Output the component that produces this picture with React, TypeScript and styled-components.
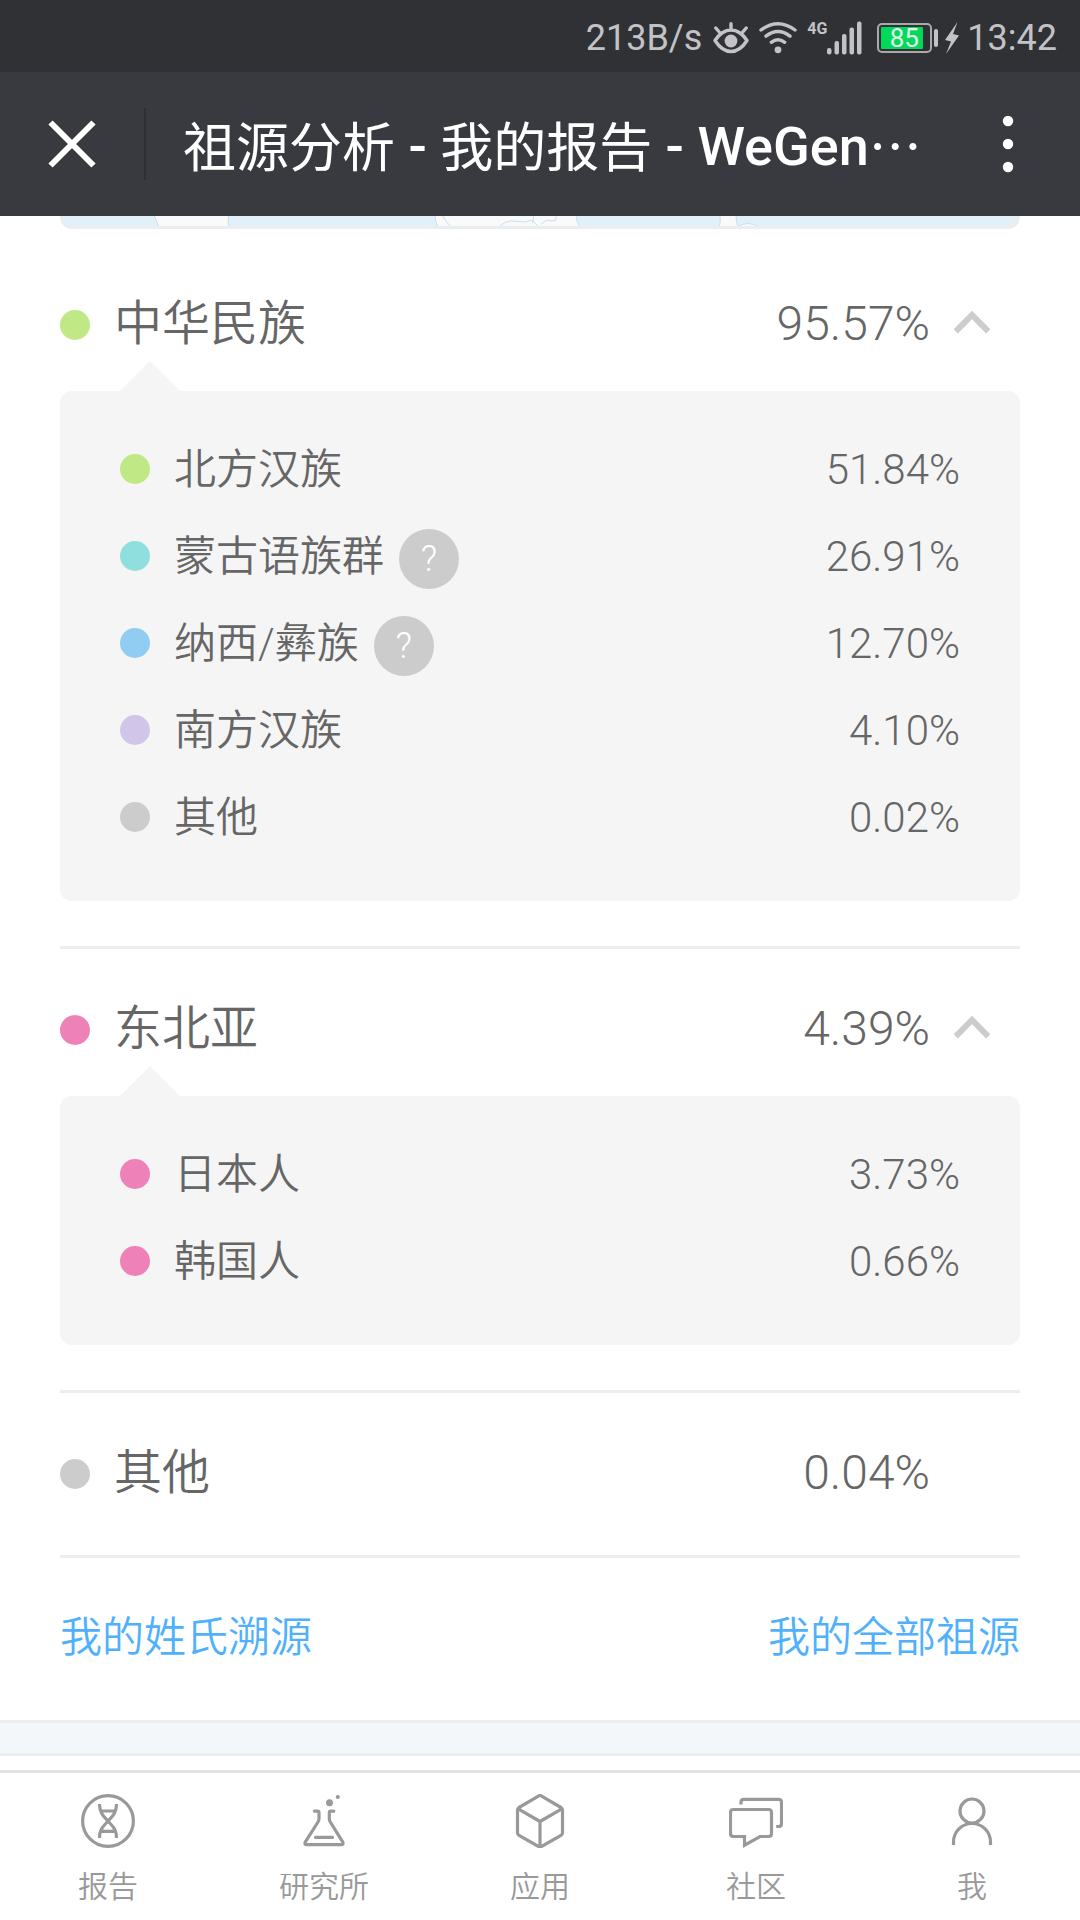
import React, { useState } from 'react';
import styled, { createGlobalStyle } from 'styled-components';

const GlobalStyle = createGlobalStyle`
  *, *::before, *::after { box-sizing: border-box; }
  body {
    margin: 0;
    background: #ffffff;
    color: #666666;
    font-family: Roboto, "Noto Sans CJK SC", sans-serif;
    font-weight: 300;
  }
  button { border: 0; padding: 0; background: none; color: inherit; font: inherit; cursor: pointer; }
  a { color: inherit; text-decoration: none; }
  ul { list-style: none; margin: 0; padding: 0; }
  h1, h2 { margin: 0; font: inherit; }
  svg { display: block; flex: none; }
`;

const Page = styled.div`
  display: flex;
  flex-direction: column;
  min-height: 100vh;
`;

const StatusBar = styled.div`
  display: flex;
  align-items: center;
  justify-content: flex-end;
  height: 72px;
  padding: 3px 23px 0;
  background: #303135;
  color: #c3c3c7;
  font-size: 36px;
  font-weight: 400;
  line-height: 42px;
`;

const StatusIcons = styled.div`
  display: flex;
  align-items: center;
  padding: 0 8px 0 11px;
`;

const NetworkType = styled.span`
  align-self: flex-start;
  margin-left: 10px;
  font-size: 16px;
  font-weight: 700;
  line-height: 16px;
`;

const Battery = styled.div`
  display: flex;
  align-items: center;
  gap: 2px;
  margin: 0 7px 0 15px;
`;

const BatteryCase = styled.div`
  width: 55px;
  height: 30px;
  padding: 2px;
  border: 2px solid #a9a9ac;
  border-radius: 5px;
`;

const BatteryLevel = styled.div`
  width: 42px;
  height: 22px;
  padding-left: 4px;
  border-radius: 1px;
  background: #00d95a;
  color: #e3f5ea;
  font-size: 26px;
  line-height: 22px;
  text-align: center;
`;

const BatteryTip = styled.div`
  width: 4px;
  height: 18px;
  border-radius: 2px;
  background: #c3c3c7;
`;

const AppBar = styled.header`
  display: flex;
  align-items: center;
  height: 144px;
  background: #393a3f;
  color: #ffffff;
`;

const BarButton = styled.button<{ $width: number }>`
  display: flex;
  flex: none;
  align-items: center;
  justify-content: center;
  width: ${(p) => p.$width}px;
  height: 144px;
`;

const BarDivider = styled.span`
  flex: none;
  width: 2px;
  height: 72px;
  background: #2e2f33;
`;

const Title = styled.h1`
  flex: 1;
  min-width: 0;
  padding: 6px 0 0 37px;
  overflow: hidden;
  white-space: nowrap;
  font-size: 54px;
  font-weight: 500;
  line-height: 80px;
`;

const HanTitle = styled.span`
  font-family: "Noto Sans CJK SC", sans-serif;
  font-size: 53px;
  font-weight: 400;
  line-height: 1;
  vertical-align: -2px;
`;

const Ellipsis = styled(HanTitle)`
  font-family: "Noto Sans CJK JP", sans-serif;
`;

const Main = styled.main`
  flex: 1;
`;

const Report = styled.div`
  padding: 0 60px;
`;

const MapEdge = styled.div`
  height: 13px;
  margin-bottom: 15px;
  overflow: hidden;
  border: 3px solid #ebeef1;
  border-top: 0;
  border-radius: 0 0 12px 12px;
  background: #e2f0fa;
`;

const Group = styled.section`
  padding: 45px 0;
  border-bottom: 3px solid #ebeef1;
`;

const GroupHead = styled.button`
  display: flex;
  align-items: center;
  width: 100%;
  height: 72px;
  font-size: 48px;
  line-height: 72px;
  text-align: left;

  &:disabled { color: inherit; cursor: default; }
`;

const Dot = styled.span<{ $color: string }>`
  flex: none;
  width: 30px;
  height: 30px;
  margin-right: 24px;
  border-radius: 50%;
  background: ${(p) => p.$color};
`;

const Name = styled.span`
  font-weight: 350;
`;

const GroupName = styled(Name)`
  padding-bottom: 2px;
`;

const Percent = styled.span`
  margin-left: auto;
`;

const GroupPercent = styled(Percent)`
  padding-bottom: 2px;
`;

const ChevronSlot = styled.span<{ $open: boolean }>`
  display: flex;
  flex: none;
  justify-content: center;
  width: 84px;
  margin-right: 6px;
  transform: ${(p) => (p.$open ? 'none' : 'rotate(180deg)')};
`;

const Panel = styled.ul`
  position: relative;
  margin-top: 30px;
  padding: 34px 60px 41px;
  border-radius: 12px;
  background: #f5f5f5;

  &::before {
    content: "";
    position: absolute;
    left: 60px;
    bottom: 100%;
    border: 30px solid transparent;
    border-top: 0;
    border-bottom-color: #f5f5f5;
  }
`;

const Row = styled.li`
  display: flex;
  align-items: center;
  height: 87px;
  font-size: 42px;
  line-height: 65px;

  ${Name}, ${Percent} { padding-top: 2px; }
`;

const HelpButton = styled.button`
  flex: none;
  width: 60px;
  height: 60px;
  margin: 6px 0 0 15px;
  border-radius: 50%;
  background: #cccccc;
  color: #ffffff;
  font-size: 36px;
  line-height: 60px;
  text-align: center;
`;

const Links = styled.nav`
  display: flex;
  justify-content: space-between;
  padding: 44px 60px 46px;
  color: #4fb1fb;
  font-size: 42px;
  font-weight: 350;
  line-height: 72px;
`;

const Gap = styled.div`
  height: 36px;
  border: solid #ebeef1;
  border-width: 3px 0;
  background: #f3f7fa;
`;

const TabBar = styled.nav`
  position: sticky;
  bottom: 0;
  display: flex;
  border-top: 3px solid #e0e4e7;
  background: #ffffff;
`;

const Tab = styled.a`
  display: flex;
  flex: 1;
  flex-direction: column;
  align-items: center;
  gap: 16px;
  height: 147px;
  padding-top: 21px;
  color: #999999;
  font-size: 30px;
  font-weight: 350;
  line-height: 45px;
`;

type Item = { name: string; value: string; color: string; help?: boolean };
type GroupData = Item & { items?: Item[] };

const groups: GroupData[] = [
  {
    name: '中华民族', value: '95.57%', color: '#c0e884',
    items: [
      { name: '北方汉族', value: '51.84%', color: '#c0e884' },
      { name: '蒙古语族群', value: '26.91%', color: '#8fdfdf', help: true },
      { name: '纳西/彝族', value: '12.70%', color: '#91cdf2', help: true },
      { name: '南方汉族', value: '4.10%', color: '#d1c5ea' },
      { name: '其他', value: '0.02%', color: '#cccccc' },
    ],
  },
  {
    name: '东北亚', value: '4.39%', color: '#ee82b8',
    items: [
      { name: '日本人', value: '3.73%', color: '#ee82b8' },
      { name: '韩国人', value: '0.66%', color: '#ee82b8' },
    ],
  },
  { name: '其他', value: '0.04%', color: '#cccccc' },
];

const stroke = { fill: 'none', stroke: 'currentColor', strokeWidth: 3.2 };

const tabs = [
  {
    label: '报告',
    icon: (
      <g {...stroke}>
        <circle cx="27" cy="27" r="25.4" />
        <path d="M18.5 10C18.5 19 22.5 22 27 27.2C31.5 32 35.5 35 35.5 44M35.5 10C35.5 19 31.5 22 27 27.2C22.5 32 18.5 35 18.5 44M20 17h14M20 37.3h14" />
      </g>
    ),
  },
  {
    label: '研究所',
    icon: (
      <g {...stroke} strokeLinecap="round" strokeLinejoin="round">
        <path d="M17.5 17.2h3q1.5 0 1.5 1.5v6q0 1.5-1 3.3L8.2 48.2q-1 2.5 1.5 2.5h34.6q2.5 0 1.5-2.5L33.3 28q-1-1.8-1-3.3v-6q0-1.5 1.5-1.5h3M18.5 43.3h17" />
        <circle cx="32.5" cy="8.7" r="3.5" fill="currentColor" stroke="none" />
        <circle cx="40.8" cy="3" r="2.1" fill="currentColor" stroke="none" />
      </g>
    ),
  },
  {
    label: '应用',
    icon: (
      <g {...stroke} strokeLinejoin="round">
        <path d="M25.8 1.8q1.2-.7 2.4 0L48 13.5q1.5 1 1.5 2.5v23q0 1.5-1.5 2.4L28.2 52.7q-1.2.7-2.4 0L6 41.4Q4.5 40.5 4.5 39V16q0-1.5 1.5-2.5ZM5.2 14.8L27 27.5L48.8 14.8M27 27.5V53" />
      </g>
    ),
  },
  {
    label: '社区',
    icon: (
      <g {...stroke}>
        <path d="M4.5 15.5h35q3 0 3 3v21q0 3-3 3H31L15.5 51.2v-8.7h-11q-3 0-3-3v-21q0-3 3-3Z" />
        <path d="M12 10.5V8.3q0-3 3-3h34.5q3 0 3 3v21.2q0 3-3 3h-2.3" />
      </g>
    ),
  },
  {
    label: '我',
    icon: (
      <g {...stroke}>
        <circle cx="27" cy="17" r="12" />
        <path d="M8.5 51v-3a18.5 18.5 0 0 1 37 0v3" />
      </g>
    ),
  },
];

const WifiSvg = styled.svg`
  margin-left: 10px;
`;

function EyeIcon() {
  return (
    <svg width="36" height="32" viewBox="0 0 36 32" aria-hidden="true">
      <g fill="none" stroke="currentColor" strokeWidth="3.4" strokeLinecap="round" strokeLinejoin="round">
        <path d="M2 18.5Q9 8 18 8t16 10.5Q27 29.5 18 29.5T2 18.5ZM18 7V1.8M7.5 11.5L2.8 6M28.5 11.5L33.2 6" />
      </g>
      <circle cx="18" cy="19" r="6.4" fill="currentColor" />
    </svg>
  );
}

function WifiIcon() {
  return (
    <WifiSvg width="38" height="32" viewBox="0 0 38 32" aria-hidden="true">
      <path
        d="M2 8Q19-4.5 36 8M7 14.2Q19 4.8 31 14.2M12.3 20.3Q19 15 25.7 20.3"
        fill="none"
        stroke="currentColor"
        strokeWidth="3.4"
        strokeLinecap="round"
      />
      <circle cx="19" cy="27.8" r="3.4" fill="currentColor" />
    </WifiSvg>
  );
}

function SignalIcon() {
  return (
    <svg width="35" height="34" viewBox="0 0 35 34" aria-hidden="true">
      <g fill="currentColor">
        <rect x="0" y="27" width="4.5" height="6.5" rx="2.2" />
        <rect x="7.5" y="20" width="4.5" height="13.5" rx="2" />
        <rect x="15" y="13" width="4.5" height="20.5" rx="2" />
        <rect x="22.5" y="6.5" width="4.5" height="27" rx="2" />
        <rect x="30" y="0.5" width="4.5" height="33" rx="2" />
      </g>
    </svg>
  );
}

function BoltIcon() {
  return (
    <svg width="14" height="32" viewBox="0 0 14 32" aria-hidden="true">
      <path d="M12.5 0L0 18l6 1.5L1 32L14 13.5l-6-1.5Z" fill="currentColor" />
    </svg>
  );
}

function MapStrip() {
  return (
    <MapEdge>
      <svg width="100%" height="10" viewBox="0 0 954 10" preserveAspectRatio="none" aria-hidden="true">
        <g fill="#fafafa" stroke="#c3e0f2" strokeWidth="1">
          <path d="M91-1L96 11H166Q164 5 166-1Z" />
          <path d="M372-1Q372 6 375 11H517Q513 5 513-1Z" />
          <path d="M657-1Q658 6 656 11H675Q673 5 673-1Z" />
          <path d="M674 11Q685 4 696 11" />
          <path d="M379-1Q383 6 388 11M437 10Q442 5 448 5L462 6L469 4L476 11M470-1Q472 4 469 7M478 8L484 4Q490 6 493 4V-1" fill="none" />
        </g>
      </svg>
    </MapEdge>
  );
}

function AncestryGroup({ group }: { group: GroupData }) {
  const [open, setOpen] = useState(true);
  return (
    <Group>
      <h2>
        <GroupHead
          type="button"
          disabled={!group.items}
          aria-expanded={group.items ? open : undefined}
          onClick={() => setOpen(!open)}
        >
          <Dot $color={group.color} />
          <GroupName>{group.name}</GroupName>
          <GroupPercent>{group.value}</GroupPercent>
          <ChevronSlot $open={open}>
            {group.items && (
              <svg width="38" height="30" viewBox="0 0 38 30" aria-hidden="true">
                <path d="M2.8 21.4L19 5L35.2 21.4" fill="none" stroke="#cccccc" strokeWidth="6" />
              </svg>
            )}
          </ChevronSlot>
        </GroupHead>
      </h2>
      {group.items && open && (
        <Panel>
          {group.items.map((item) => (
            <Row key={item.name}>
              <Dot $color={item.color} />
              <Name>{item.name}</Name>
              {item.help && <HelpButton type="button" aria-label={item.name}>?</HelpButton>}
              <Percent>{item.value}</Percent>
            </Row>
          ))}
        </Panel>
      )}
    </Group>
  );
}

export default function App() {
  return (
    <Page>
      <GlobalStyle />
      <StatusBar>
        <span>213B/s</span>
        <StatusIcons>
          <EyeIcon />
          <WifiIcon />
          <NetworkType>4G</NetworkType>
          <SignalIcon />
          <Battery>
            <BatteryCase>
              <BatteryLevel>85</BatteryLevel>
            </BatteryCase>
            <BatteryTip />
          </Battery>
          <BoltIcon />
        </StatusIcons>
        <span>13:42</span>
      </StatusBar>
      <AppBar>
        <BarButton type="button" $width={144} aria-label="关闭">
          <svg width="48" height="48" viewBox="0 0 48 48" aria-hidden="true">
            <path d="M2.5 2.5L45.5 45.5M45.5 2.5L2.5 45.5" stroke="#ffffff" strokeWidth="6" />
          </svg>
        </BarButton>
        <BarDivider />
        <Title>
          <HanTitle>祖源分析</HanTitle> - <HanTitle>我的报告</HanTitle> - WeGen<Ellipsis lang="ja">…</Ellipsis>
        </Title>
        <BarButton type="button" $width={144} aria-label="更多">
          <svg width="12" height="58" viewBox="0 0 12 58" aria-hidden="true">
            <g fill="#ffffff">
              <circle cx="6" cy="6" r="5.2" />
              <circle cx="6" cy="29" r="5.2" />
              <circle cx="6" cy="52" r="5.2" />
            </g>
          </svg>
        </BarButton>
      </AppBar>
      <Main>
        <Report>
          <MapStrip />
          {groups.map((group) => (
            <AncestryGroup key={group.name} group={group} />
          ))}
        </Report>
        <Links>
          <a href="#surname">我的姓氏溯源</a>
          <a href="#all">我的全部祖源</a>
        </Links>
        <Gap />
      </Main>
      <TabBar>
        {tabs.map((tab) => (
          <Tab key={tab.label} href="#">
            <svg width="54" height="54" viewBox="0 0 54 54" aria-hidden="true">{tab.icon}</svg>
            {tab.label}
          </Tab>
        ))}
      </TabBar>
    </Page>
  );
}
